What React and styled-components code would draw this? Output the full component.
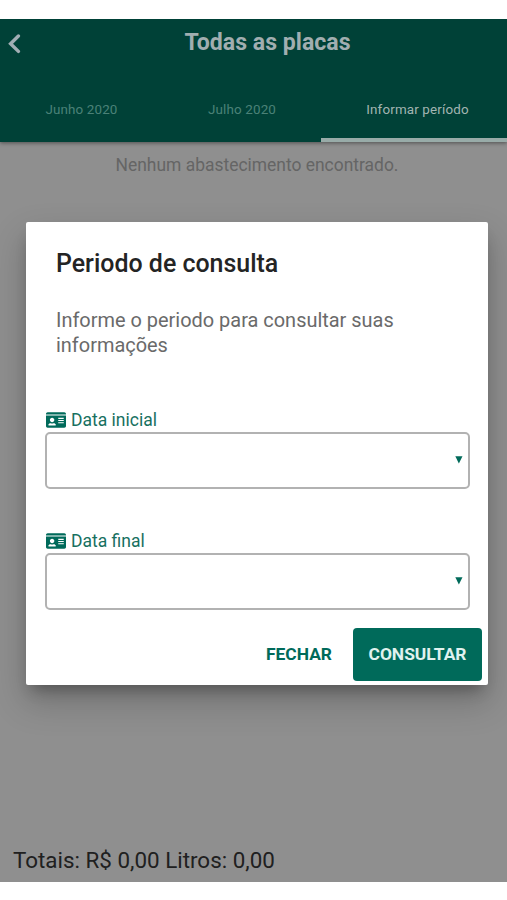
import React, { Component } from "react";
import styled, { createGlobalStyle } from "styled-components";
import { FaIdCard } from "react-icons/fa";

///style///

const GlobalStyle = createGlobalStyle`
  * {
    box-sizing: border-box;
  }
  body {
    margin: 0;
    background: #ffffff;
    font-family: Roboto, "Liberation Sans", sans-serif;
  }
  p, h1, h2 {
    margin: 0;
  }
`;

const AppWrapper = styled.div`
  width: 507px;
  height: 900px;
  padding: 19px 0 18px;
  overflow: hidden;
`;
const Screen = styled.div`
  position: relative;
  display: flex;
  flex-direction: column;
  height: 863px;
  background: #8f8f8f;
  overflow: hidden;
`;
const Header = styled.header`
  height: 123px;
  display: flex;
  flex-direction: column;
  background: #004137;
  box-shadow: 0 1px 4px rgba(0, 0, 0, 0.45);
`;
const TitleBar = styled.div`
  height: 47px;
  display: grid;
  grid-template-columns: 28px 1fr 0;
  align-items: center;
`;
const BackButton = styled.button`
  display: flex;
  padding: 2px 0 0 8px;
  border: none;
  background: none;
  color: #a1aeb4;
`;
const Title = styled.h1`
  padding-bottom: 1px;
  text-align: center;
  font-weight: bold;
  font-size: 23.1px;
  line-height: 27px;
  color: #a1aeb0;
`;
const Tabs = styled.nav`
  flex: 1;
  display: grid;
  grid-template-columns: 163px 158px 1fr;
`;
const Tab = styled.button`
  display: flex;
  justify-content: center;
  padding: 36px 0 0 ${props => (props.$active ? "7px" : "0")};
  border: none;
  border-bottom: 4px solid ${props => (props.$active ? "#98aba8" : "transparent")};
  background: none;
  font-family: inherit;
  font-size: 13.4px;
  line-height: 16px;
  letter-spacing: 0.15px;
  color: ${props => (props.$active ? "#a3b5b2" : "#4b8177")};
`;
const EmptyMessage = styled.p`
  flex: 1;
  padding: 13px 0 0 7px;
  text-align: center;
  font-size: 17.45px;
  line-height: 21px;
  color: #656565;
`;
const Totals = styled.footer`
  padding: 0 13px 9px;
  font-size: 22.4px;
  line-height: 26px;
  color: #202020;
`;

/* dialog */
const Overlay = styled.div`
  position: absolute;
  inset: 0;
  padding: 203px 19px 0 26px;
`;
const Dialog = styled.section`
  display: flex;
  flex-direction: column;
  height: 463px;
  padding: 27px 6px 4px 19px;
  border-radius: 2px;
  background: #ffffff;
  box-shadow: 0 10px 14px -6px rgba(0, 0, 0, 0.3),
    0 16px 34px 2px rgba(0, 0, 0, 0.2);
`;
const DialogTitle = styled.h2`
  padding-left: 11px;
  font-weight: 500;
  font-size: 24.95px;
  line-height: 30px;
  color: #242424;
`;
const DialogText = styled.p`
  width: 370px;
  margin-top: 29px;
  padding-left: 11px;
  font-size: 19.95px;
  line-height: 25px;
  color: #6a6a6a;
`;
const Field = styled.div`
  width: 425px;
  margin-top: ${props => props.$top}px;
`;
const FieldLabel = styled.label`
  display: flex;
  align-items: center;
  height: 24px;
  font-size: 17.5px;
  line-height: 22px;
  color: #17705f;
  svg {
    margin: 0 5px 0 1px;
    color: #006a5a;
  }
`;
const DateSelect = styled.div`
  height: 57px;
  display: flex;
  align-items: center;
  justify-content: flex-end;
  padding: 0 5px 1px 0;
  border: 2px solid #b2b2b2;
  border-radius: 5px;
`;
const Actions = styled.div`
  display: flex;
  justify-content: flex-end;
  margin-top: auto;
`;
const ActionButton = styled.button`
  width: ${props => (props.$primary ? 129 : 108)}px;
  height: 53px;
  padding: 0 0 2px;
  border: none;
  border-radius: 4px;
  background: ${props => (props.$primary ? "#006a5a" : "none")};
  font-family: inherit;
  font-weight: 700;
  font-size: 17.4px;
  line-height: 20px;
  color: ${props => (props.$primary ? "#e0f2ef" : "#006a5a")};
`;

//style end//

const tabs = ["Junho 2020", "Julho 2020", "Informar período"];

const fields = [
  { label: "Data inicial", top: 50 },
  { label: "Data final", top: 40 }
];

class App extends Component {
  constructor(props) {
    super(props);
    this.state = {
      activeTab: 2,
      open: true
    };
  }
  onSelectTab = num => {
    this.setState({ activeTab: num, open: num === 2 });
  };
  onClose = () => {
    this.setState({ open: false });
  };

  render() {
    const { activeTab, open } = this.state;

    return (
      <AppWrapper>
        <GlobalStyle />
        <Screen>
          <Header>
            <TitleBar>
              <BackButton type="button">
                <svg width="13" height="20" viewBox="0 0 13 20" fill="none">
                  <path
                    d="M10.4 2 2.6 9.7l7.8 7.7"
                    stroke="currentColor"
                    strokeWidth="3.4"
                    strokeLinecap="round"
                  />
                </svg>
              </BackButton>
              <Title>Todas as placas</Title>
            </TitleBar>
            <Tabs>
              {tabs.map((name, num) => (
                <Tab
                  key={name}
                  type="button"
                  $active={num === activeTab}
                  onClick={() => this.onSelectTab(num)}
                >
                  {name}
                </Tab>
              ))}
            </Tabs>
          </Header>
          <EmptyMessage>Nenhum abastecimento encontrado.</EmptyMessage>
          <Totals>Totais: R$ 0,00 Litros: 0,00</Totals>

          {open && (
            <Overlay>
              <Dialog>
                <DialogTitle>Periodo de consulta</DialogTitle>
                <DialogText>
                  Informe o periodo para consultar suas informações
                </DialogText>
                {fields.map(field => (
                  <Field key={field.label} $top={field.top}>
                    <FieldLabel>
                      <FaIdCard size={20} />
                      {field.label}
                    </FieldLabel>
                    <DateSelect>
                      <svg width="8" height="8" viewBox="0 0 8 8">
                        <path d="M0.3 0.2h7.2L3.9 7.5z" fill="#006a5a" />
                      </svg>
                    </DateSelect>
                  </Field>
                ))}
                <Actions>
                  <ActionButton type="button" onClick={this.onClose}>
                    FECHAR
                  </ActionButton>
                  <ActionButton type="button" $primary>
                    CONSULTAR
                  </ActionButton>
                </Actions>
              </Dialog>
            </Overlay>
          )}
        </Screen>
      </AppWrapper>
    );
  }
}

export default App;
